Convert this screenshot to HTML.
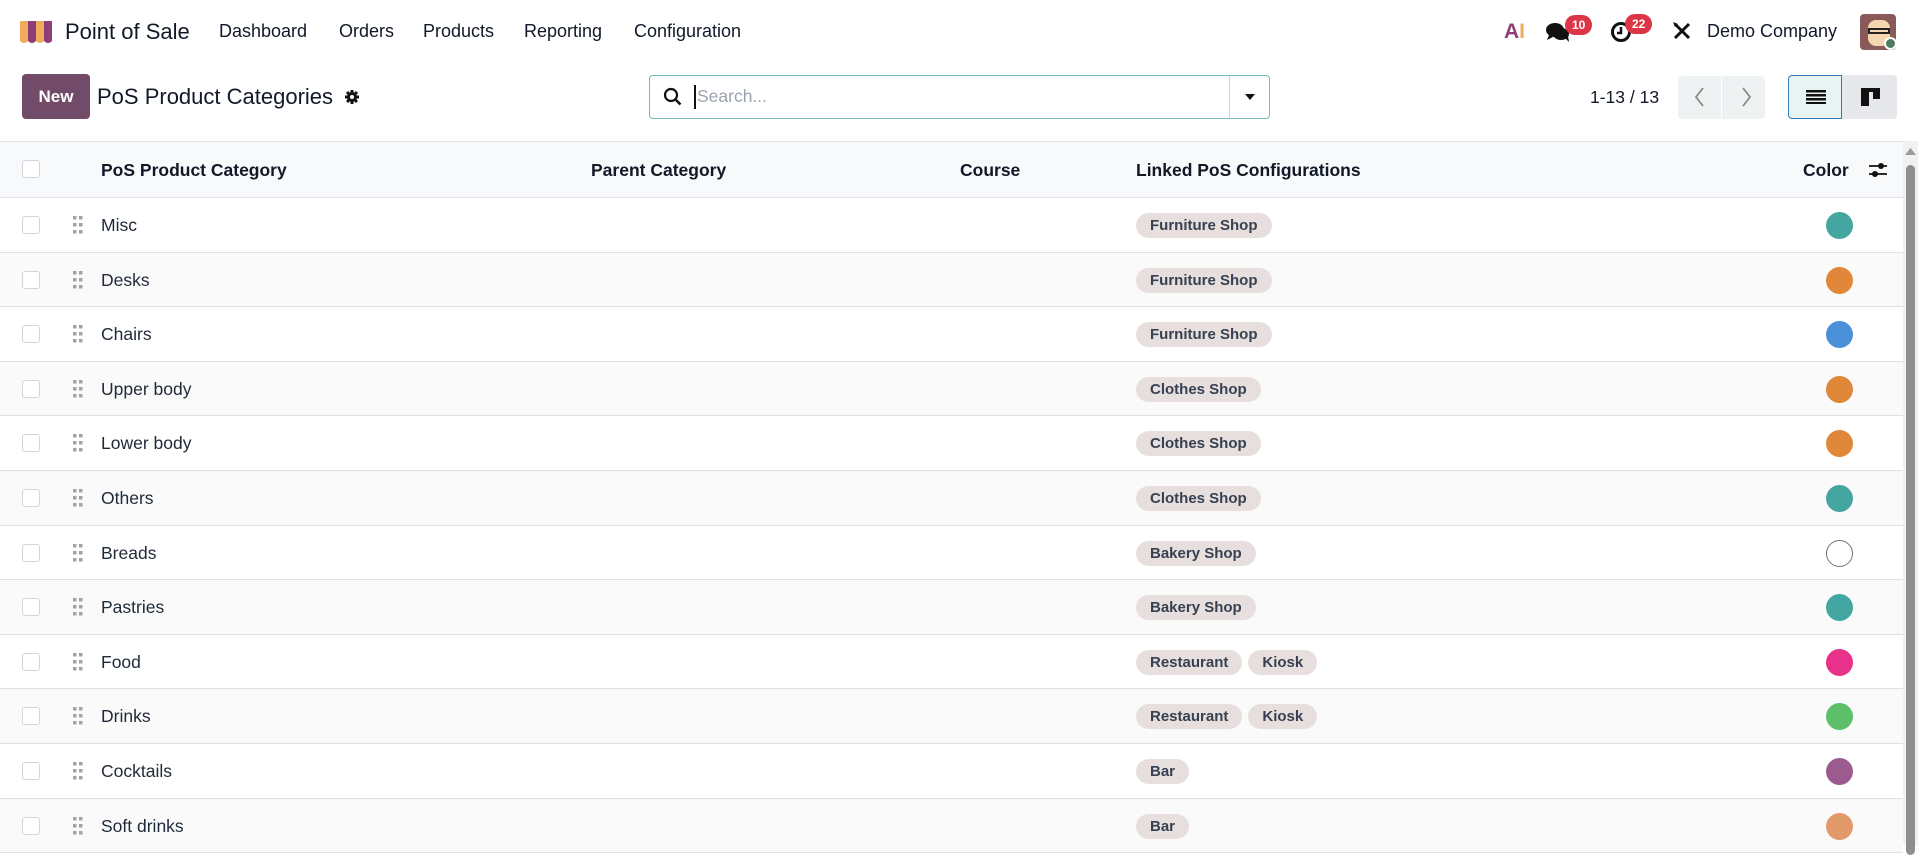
<!DOCTYPE html>
<html><head><meta charset="utf-8"><style>
*{box-sizing:border-box;margin:0;padding:0}
body{width:1918px;height:845px;overflow:hidden;background:#fff;font-family:"Liberation Sans",sans-serif;color:#1f2937;position:relative}
.a{position:absolute}
.nav{font-size:18px;color:#111827;top:21px}
.row{position:absolute;left:0;width:1903px;border-bottom:1px solid #dee2e6}
.row .cb{position:absolute;left:22px;top:18px;width:18px;height:18px;border:1px solid #d1d5db;border-radius:3px;background:#fff}
.row .dh{position:absolute;left:73px;top:18px;width:10px;height:18px}
.row .nm{position:absolute;left:101px;top:17px;font-size:17.5px;color:#1f2937}
.tag{display:inline-block;height:25px;line-height:25px;padding:0 14px;border-radius:13px;background:#e6dfdd;color:#374151;font-weight:bold;font-size:15px;margin-right:6px}
.tags{position:absolute;left:1136px;top:15px}
.dot{position:absolute;left:1826px;top:14px;width:27px;height:27px;border-radius:50%}
.badge{position:absolute;background:#dc3545;color:#fff;font-size:12px;font-weight:bold;border-radius:10px;height:20px;line-height:20px;padding:0 7px}
</style></head><body>
<svg class="a" style="left:18px;top:19px" width="36" height="26" viewBox="0 0 36 26">
<path d="M2 2h8v20q-4 4-8 0z" fill="#f0ac5c"/><path d="M10 2h8v20q-4 4-8 0z" fill="#8e3f77"/><path d="M18 2h8v20q-4 4-8 0z" fill="#f0ac5c"/><path d="M26 2h8v20q-4 4-8 0z" fill="#8e3f77"/>
</svg>
<div class="a" style="left:65px;top:19px;font-size:22px;color:#111827">Point of Sale</div>
<div class="a nav" style="left:219px">Dashboard</div>
<div class="a nav" style="left:339px">Orders</div>
<div class="a nav" style="left:423px">Products</div>
<div class="a nav" style="left:524px">Reporting</div>
<div class="a nav" style="left:634px">Configuration</div>
<div class="a" style="left:1504px;top:20px;font-size:21px;font-weight:bold;color:#8e3f77">A<span style="color:#f0ac5c">I</span></div>
<svg class="a" style="left:1545px;top:21px" width="26" height="22" viewBox="0 0 26 22"><ellipse cx="10" cy="9" rx="9" ry="7" fill="#111"/><ellipse cx="16" cy="13" rx="8" ry="6" fill="#111"/><path d="M4 14l-2 5 6-3z M20 17l4 4-1-6z" fill="#111"/></svg>
<div class="badge" style="left:1565px;top:15px">10</div>
<svg class="a" style="left:1610px;top:21px" width="22" height="22" viewBox="0 0 22 22"><circle cx="11" cy="11" r="8.5" fill="none" stroke="#111" stroke-width="3"/><path d="M11 6v6h-4" fill="none" stroke="#111" stroke-width="2.5"/></svg>
<div class="badge" style="left:1625px;top:14px">22</div>
<svg class="a" style="left:1672px;top:21px" width="20" height="20" viewBox="0 0 20 20"><path d="M3 3l14 14M17 3L3 17" stroke="#111" stroke-width="3"/><path d="M1 1l5 2-3 3z" fill="#111"/></svg>
<div class="a" style="left:1707px;top:21px;font-size:18px;color:#111827">Demo Company</div>
<div class="a" style="left:1860px;top:14px;width:36px;height:36px;border-radius:4px;background:#8a5a5a;overflow:hidden"><div class="a" style="left:8px;top:6px;width:22px;height:26px;border-radius:8px;background:#f4d6b0"></div><div class="a" style="left:8px;top:14px;width:22px;height:6px;border:2px solid #222"></div></div>
<div class="a" style="left:1884px;top:37px;width:13px;height:13px;border-radius:50%;background:#4d7a60;border:2px solid #fff"></div>
<div class="a" style="left:22px;top:74px;width:68px;height:45px;background:#714b67;border-radius:4px;color:#fff;font-weight:bold;font-size:17px;text-align:center;line-height:45px">New</div>
<div class="a" style="left:97px;top:84px;font-size:22px;color:#111827">PoS Product Categories</div>
<svg class="a" style="left:344px;top:89px" width="16" height="16" viewBox="0 0 16 16"><circle cx="8" cy="8" r="5" fill="#111"/><g stroke="#111" stroke-width="3"><path d="M8 1v14M1 8h14M3 3l10 10M13 3L3 13"/></g><circle cx="8" cy="8" r="2" fill="#fff"/></svg>
<div class="a" style="left:649px;top:75px;width:621px;height:44px;border:1px solid #71b8c0;border-radius:4px"></div>
<svg class="a" style="left:663px;top:87px" width="20" height="20" viewBox="0 0 20 20"><circle cx="8" cy="8" r="6" fill="none" stroke="#111" stroke-width="2.2"/><path d="M12.5 12.5l5 5" stroke="#111" stroke-width="2.5"/></svg>
<div class="a" style="left:694px;top:85px;width:2px;height:24px;background:#111"></div>
<div class="a" style="left:697px;top:86px;font-size:17.5px;color:#9ca3af">Search...</div>
<div class="a" style="left:1229px;top:76px;width:1px;height:42px;background:#d1d5db"></div>
<svg class="a" style="left:1244px;top:93px" width="12" height="8" viewBox="0 0 12 8"><path d="M1 1h10L6 7z" fill="#111"/></svg>
<div class="a" style="left:1590px;top:87px;font-size:17.5px;color:#111827">1-13 / 13</div>
<div class="a" style="left:1678px;top:76px;width:87px;height:43px;background:#eef2f3;border-radius:4px"></div>
<div class="a" style="left:1721px;top:76px;width:1px;height:43px;background:#fff"></div>
<svg class="a" style="left:1693px;top:86px" width="60" height="22" viewBox="0 0 60 22"><path d="M10 2l-7 9 7 9M50 2l7 9-7 9" fill="none" stroke="#8a8a8a" stroke-width="1.8"/></svg>
<div class="a" style="left:1788px;top:75px;width:54px;height:44px;border:1px solid #2f7ab8;background:#e8f3f4;border-radius:4px 0 0 4px"></div>
<div class="a" style="left:1806px;top:90px;width:20px;height:14px;background:repeating-linear-gradient(#111 0 2.5px,transparent 2.5px 4px)"></div>
<div class="a" style="left:1842px;top:75px;width:55px;height:44px;background:#e6e8eb;border-radius:0 4px 4px 0"></div>
<div class="a" style="left:1861px;top:88px;width:8px;height:18px;background:#111"></div><div class="a" style="left:1861px;top:88px;width:19px;height:4px;background:#111"></div><div class="a" style="left:1873px;top:92px;width:7px;height:7px;background:#111"></div>
<div class="a" style="left:0;top:141px;width:1903px;height:57px;background:#f8f9fa;border-top:1px solid #dee2e6;border-bottom:1px solid #dee2e6"></div>
<div class="a" style="left:22px;top:160px;width:18px;height:18px;border:1px solid #d1d5db;border-radius:3px;background:#fff"></div>
<div class="a" style="left:101px;top:160px;font-size:17.5px;font-weight:bold;color:#111827">PoS Product Category</div>
<div class="a" style="left:591px;top:160px;font-size:17.5px;font-weight:bold;color:#111827">Parent Category</div>
<div class="a" style="left:960px;top:160px;font-size:17.5px;font-weight:bold;color:#111827">Course</div>
<div class="a" style="left:1136px;top:160px;font-size:17.5px;font-weight:bold;color:#111827">Linked PoS Configurations</div>
<div class="a" style="left:1803px;top:160px;font-size:17.5px;font-weight:bold;color:#111827">Color</div>
<svg class="a" style="left:1868px;top:161px" width="20" height="18" viewBox="0 0 20 18"><path d="M1 5h18M1 13h18" stroke="#111" stroke-width="1.8"/><circle cx="13" cy="5" r="3" fill="#111"/><circle cx="7" cy="13" r="3" fill="#111"/></svg>
<div class="a" style="left:1903px;top:141px;width:15px;height:704px;background:#f1f1f1"></div>
<svg class="a" style="left:1904px;top:147px" width="13" height="9" viewBox="0 0 13 9"><path d="M1 8h11L6.5 1z" fill="#9a9a9a"/></svg>
<div class="a" style="left:1906px;top:165px;width:9px;height:690px;background:#8e8e8e;border-radius:5px"></div>
<div id="rows"></div>
<script>
var d=[["Misc",["Furniture Shop"],"#44a6a0"],["Desks",["Furniture Shop"],"#e0873a"],["Chairs",["Furniture Shop"],"#4a90d9"],["Upper body",["Clothes Shop"],"#e0873a"],["Lower body",["Clothes Shop"],"#e0873a"],["Others",["Clothes Shop"],"#44a6a0"],["Breads",["Bakery Shop"],""],["Pastries",["Bakery Shop"],"#44a6a0"],["Food",["Restaurant","Kiosk"],"#e8318a"],["Drinks",["Restaurant","Kiosk"],"#5cbf6a"],["Cocktails",["Bar"],"#9b5b8f"],["Soft drinks",["Bar"],"#e29a6a"]];
var h="";d.forEach(function(r,i){var top=Math.round(198+i*54.6),nx=Math.round(198+(i+1)*54.6);
h+='<div class="row" style="top:'+top+'px;height:'+(nx-top)+'px;background:'+(i%2?'#fafafa':'#fff')+'"><div class="cb"></div><svg class="dh" viewBox="0 0 10 18"><g fill="#9ca3af"><rect x="0" y="0" width="3.5" height="3.5"/><rect x="6" y="0" width="3.5" height="3.5"/><rect x="0" y="7" width="3.5" height="3.5"/><rect x="6" y="7" width="3.5" height="3.5"/><rect x="0" y="14" width="3.5" height="3.5"/><rect x="6" y="14" width="3.5" height="3.5"/></g></svg><div class="nm">'+r[0]+'</div><div class="tags">'+r[1].map(function(t){return '<span class="tag">'+t+'</span>'}).join('')+'</div><div class="dot" style="'+(r[2]?'background:'+r[2]:'background:#fff;border:1.5px solid #6b7280')+'"></div></div>';});
document.getElementById("rows").innerHTML=h;
</script>
</body></html>
